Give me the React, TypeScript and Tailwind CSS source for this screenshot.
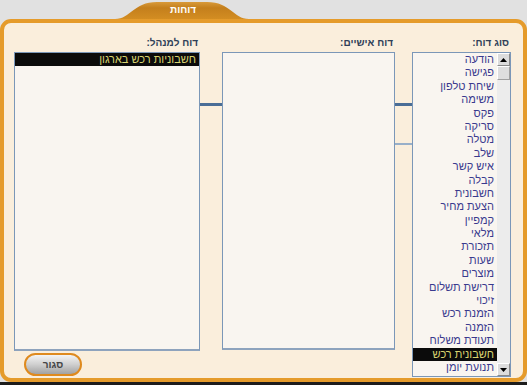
import React from 'react';

const TYPES = [
  'הודעה', 'פגישה', 'שיחת טלפון', 'משימה', 'פקס', 'סריקה', 'מטלה', 'שלב',
  'איש קשר', 'קבלה', 'חשבונית', 'הצעת מחיר', 'קמפיין', 'מלאי', 'תזכורת', 'שעות',
  'מוצרים', 'דרישת תשלום', 'זיכוי', 'הזמנת רכש', 'הזמנה', 'תעודת משלוח', 'חשבונית רכש', 'תנועת יומן',
];

const font = { fontFamily: '"Liberation Sans", "DejaVu Sans", sans-serif' };

const Label = ({ text }: { text: string }) => (
  <div dir="rtl" className="h-[29px] pt-[13px] pr-[2px] text-right text-[10px] leading-[13px] font-bold text-[#2f3f58]">
    {text}
  </div>
);

const Row = ({ text, selected }: { text: string; selected?: boolean }) => (
  <div
    dir="rtl"
    className={`h-[13.4px] pr-[3px] text-right text-[11px] leading-[13.4px] whitespace-nowrap ${
      selected ? 'bg-[#0b0b0b] text-[#d8d470]' : 'text-[#3a3a8e]'
    }`}
  >
    {text}
  </div>
);

const ArrowBtn = ({ up }: { up?: boolean }) => (
  <div className="h-[13px] w-[13px] flex items-center justify-center bg-[#dcdcdc] border border-t-white border-l-white border-r-[#8a8a8a] border-b-[#8a8a8a]">
    <svg width="7" height="4" viewBox="0 0 7 4">
      {up ? <path d="M0 4 L3.5 0 L7 4 Z" fill="#000" /> : <path d="M0 0 L3.5 4 L7 0 Z" fill="#000" />}
    </svg>
  </div>
);

export default function App() {
  return (
    <div style={font} className="w-[527px] h-[385px] bg-[#e1e1e1] flex flex-col overflow-hidden">
      {/* tab */}
      <div className="h-[19px] pl-[115px] flex">
        <div className="relative w-[134px] h-[19px]">
          <svg width="134" height="19" viewBox="0 0 134 19" className="block">
            <defs>
              <linearGradient id="tab" x1="0" y1="0" x2="0" y2="1">
                <stop offset="0" stopColor="#d89a3a" />
                <stop offset="0.35" stopColor="#c47f1c" />
                <stop offset="1" stopColor="#d38d22" />
              </linearGradient>
            </defs>
            <path d="M0 19 C16 19 18 2 42 2 L92 2 C116 2 118 19 134 19 Z" fill="url(#tab)" />
          </svg>
          <div dir="rtl" className="absolute inset-0 pt-[4px] pl-[2px] flex justify-center text-[10px] leading-[12px] font-bold text-white">
            דוחות
          </div>
        </div>
      </div>

      {/* panel */}
      <div className="h-[363px] rounded-[11px] border-[4px] border-[#e59b2b] bg-[#faeedc] flex pl-[10px]">
        {/* manager report */}
        <div className="w-[186px] flex flex-col">
          <Label text="דוח למנהל:" />
          <div className="h-[299px] border border-[#7b97b8] border-b-2 border-b-[#8ea3bd] bg-[#f9f5f0]">
            <Row text="חשבוניות רכש בארגון" selected />
          </div>
          <button className="mt-[2px] ml-[10px] w-[58px] h-[23px] rounded-full border-2 border-[#df8a1e] bg-gradient-to-b from-[#f4f4f4] via-[#cfcfcf] to-[#a2a2a2] text-[10px] font-bold text-[#444] leading-[19px]">
            סגור
          </button>
        </div>

        {/* connector */}
        <div className="w-[22px] pt-[80px]">
          <div className="h-[3px] bg-[#4a6d96]" />
        </div>

        {/* personal reports */}
        <div className="w-[173px] flex flex-col">
          <Label text="דוח אישיים:" />
          <div className="h-[298px] border border-[#7b97b8] border-b-2 border-b-[#8ea3bd] bg-[#f9f5f0]" />
        </div>

        {/* connector */}
        <div className="w-[17px] pt-[80px] flex flex-col">
          <div className="h-[3px] bg-[#4a6d96]" />
          <div className="h-[2px] mt-[37px] bg-[#98afc9]" />
        </div>

        {/* report type */}
        <div className="w-[99px] flex flex-col">
          <Label text="סוג דוח:" />
          <div className="h-[325px] border border-[#7b97b8] bg-[#f9f5f0] flex">
            <div className="flex-1 min-w-0 overflow-hidden">
              {TYPES.map((t) => (
                <Row key={t} text={t} selected={t === 'חשבונית רכש'} />
              ))}
            </div>
            <div className="w-[13px] flex flex-col bg-[#ececec]">
              <ArrowBtn up />
              <div className="h-[14px] bg-[#dedede] border border-t-white border-l-white border-r-[#a0a0a0] border-b-[#a0a0a0]" />
              <div className="flex-1" />
              <ArrowBtn />
            </div>
          </div>
        </div>
      </div>
      <div className="h-[3px] bg-[#1c1c1c]" />
    </div>
  );
}
